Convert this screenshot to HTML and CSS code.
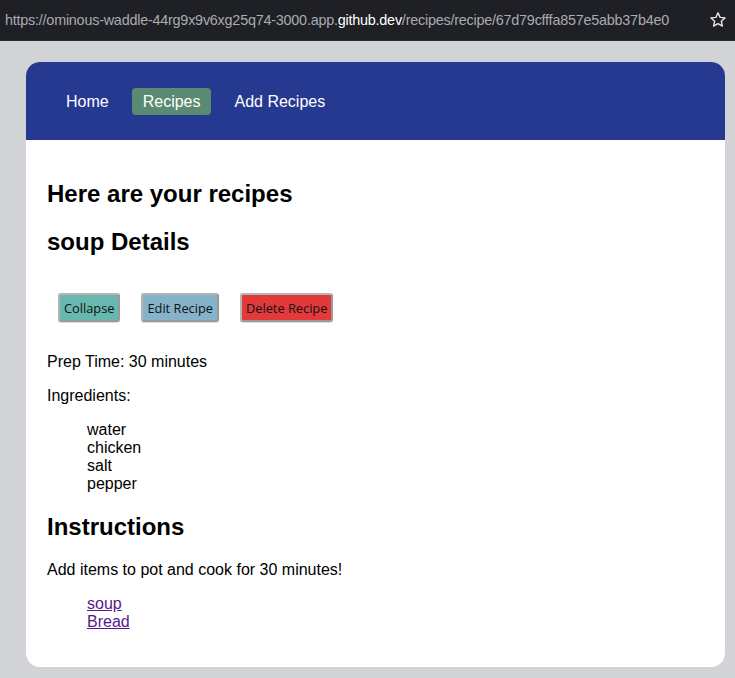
FILE: index.html
```html
<!DOCTYPE html>
<html>
<head>
<meta charset="utf-8">
<link rel="stylesheet" href="styles.css">
</head>
<body>
<div class="urlbar">
  <span class="url">https://ominous-waddle-44rg9x9v6xg25q74-3000.app.<b>github.dev</b>/recipes/recipe/67d79cfffa857e5abb37b4e0</span>
  <svg class="star" width="18" height="18" viewBox="0 0 18 18"><path d="M9 1.8 L11.1 6.4 L16 6.9 L12.3 10.2 L13.4 15.1 L9 12.6 L4.6 15.1 L5.7 10.2 L2 6.9 L6.9 6.4 Z" fill="none" stroke="#e8e8e8" stroke-width="1.4" stroke-linejoin="round"/></svg>
</div>
<div class="card">
  <nav class="nav">
    <a class="navlink">Home</a>
    <a class="navlink active">Recipes</a>
    <a class="navlink">Add Recipes</a>
  </nav>
  <main class="content">
    <h2>Here are your recipes</h2>
    <h2>soup Details</h2>
    <div class="actions">
      <button class="btn btn-collapse">Collapse</button>
      <button class="btn btn-edit">Edit Recipe</button>
      <button class="btn btn-delete">Delete Recipe</button>
    </div>
    <p>Prep Time: 30 minutes</p>
    <p>Ingredients:</p>
    <ul class="plain">
      <li>water</li>
      <li>chicken</li>
      <li>salt</li>
      <li>pepper</li>
    </ul>
    <h2>Instructions</h2>
    <p>Add items to pot and cook for 30 minutes!</p>
    <ul class="plain">
      <li><a href="#" class="rlink">soup</a></li>
      <li><a href="#" class="rlink">Bread</a></li>
    </ul>
  </main>
</div>
</body>
</html>
```

FILE: styles.css
```css
html, body {
  margin: 0;
  padding: 0;
}
body {
  background: #d2d3d7;
  font-family: "Liberation Sans", Arial, sans-serif;
  font-size: 16px;
  color: #000;
  height: 678px;
  overflow: hidden;
}
.urlbar {
  height: 41px;
  background: #1f2025;
  border-bottom: 1px solid #2c2d33;
  display: flex;
  align-items: center;
  justify-content: space-between;
  padding: 0 8px 0 5px;
  box-sizing: border-box;
}
.url {
  font-family: "Liberation Sans", Arial, sans-serif;
  font-size: 14.4px;
  color: #a9abb0;
  letter-spacing: -0.23px;
  white-space: nowrap;
}
.url b {
  font-weight: normal;
  color: #ffffff;
}
.star {
  display: block;
}
.card {
  margin: 21px 10px 0 26px;
  background: #fff;
  border-radius: 14px;
  overflow: hidden;
}
.nav {
  background: #263991;
  height: 78px;
  display: flex;
  align-items: center;
  gap: 13px;
  padding: 0 0 0 29.5px;
  box-sizing: border-box;
}
.navlink {
  color: #fff;
  font-size: 16px;
  padding: 5px 10.5px;
  border-radius: 4px;
  line-height: 17px;
}
.navlink.active {
  background: #5a8a72;
}
.content {
  padding: 20px 21px 20px 21px;
}
h2 {
  font-size: 24px;
  margin: 20px 0;
}
p {
  margin: 16px 0;
}
.actions {
  display: flex;
  gap: 21px;
  padding: 17px 0 15px 11px;
}
.btn {
  font-family: "Open Sans", "Noto Sans", sans-serif;
  font-size: 12.8px;
  color: #111;
  height: 29px;
  padding: 0 4px;
  border: 2px solid #b5b5b5;
  border-right-color: #9a9a9a;
  border-bottom-color: #9a9a9a;
  border-radius: 3px;
  box-shadow: 0 1px 1px rgba(0,0,0,0.15);
}
.btn-collapse { background: #67b9af; }
.btn-edit { background: #85b3c9; }
.btn-delete { background: #e23a3b; }
ul.plain {
  list-style: none;
  padding-left: 40px;
  margin: 16px 0;
}
.rlink {
  color: #551a8b;
}
```
